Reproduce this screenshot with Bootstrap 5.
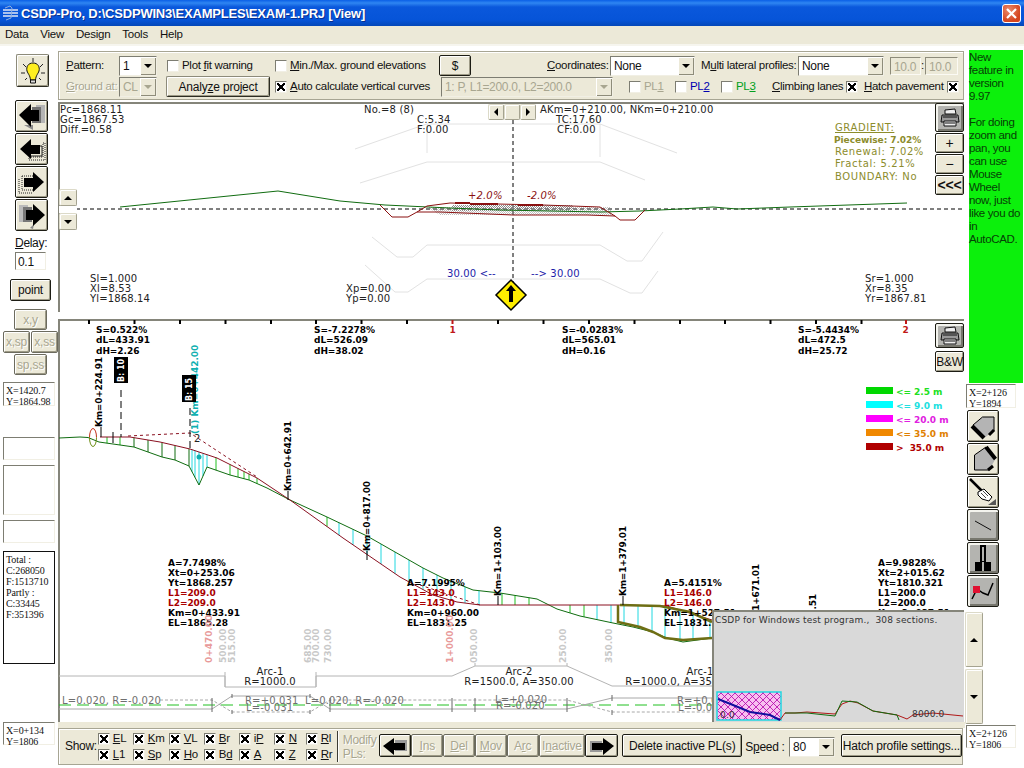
<!DOCTYPE html>
<html lang="en">
<head>
<meta charset="UTF-8">
<title>CSDP-Pro</title>
<link href="https://cdn.jsdelivr.net/npm/bootstrap@5.3.0/dist/css/bootstrap.min.css" rel="stylesheet">
<style>
  body { margin: 0; background: #fff; font: 11.5px/1 "Liberation Sans", Arial, sans-serif; letter-spacing: -.3px; color: #111; }
  .app { width: 1024px; height: 768px; overflow: hidden; background: #fff; }

  /* title + menu */
  .title-bar { height: 26px; padding: 0 3px 0 2px; background: linear-gradient(#0a5fe6 0, #2f86f2 3px, #0a58dc 7px, #0654d8 20px, #0447b8 26px); color: #fff; }
  .title-text { margin-left: 2px; font: bold 13px "Liberation Sans", sans-serif; letter-spacing: -.2px; text-shadow: 1px 1px #0a2f8f; }
  .close-btn { width: 19px; height: 19px; border: 1px solid #fff; border-radius: 3px; background: radial-gradient(circle at 35% 30%, #ea8a6c, #d4451f 70%); }
  .menu-bar { height: 20px; background: #ece9d8; border-bottom: 2px solid #f6f5ee; padding-left: 5px; gap: 12px; font-size: 11.5px; letter-spacing: -.25px; }

  .win-body { display: grid; grid-template-columns: 58px 908px 58px; height: 722px; }

  /* buttons */
  .btn.win-btn { --bs-btn-padding-x: 0; --bs-btn-padding-y: 0; --bs-btn-font-size: 12px; --bs-btn-line-height: 1; --bs-btn-border-radius: 2px;
    display: flex; align-items: center; justify-content: center; background: #ece9d8; color: #111; border: 1px solid #1c1c14; box-shadow: inset 1px 1px #fff, inset -1px -1px #9d9a86; letter-spacing: -.2px; }
  .btn.win-btn:disabled { color: #a8a690; opacity: 1; border-color: #6c6b5e; background: #ece9d8; text-shadow: 1px 1px #fff; }
  .btn.win-gray { background: #b4b4b0; box-shadow: inset 2px 2px #f4f4ee, inset -2px -2px #77776e; }
  .btn.win-soft { border-color: #8d8b7a #2c2c22 #2c2c22 #8d8b7a; }
  .btn.win-btn.win-flat { border-color: #dcdac8 #a5a390 #a5a390 #dcdac8; box-shadow: inset 1px 1px #fff; }

  /* left column */
  .left-col, .right-col { position: relative; }
  .lc-bulb { margin: 8px 0 0 16px; width: 33px; height: 33px; }
  .lc-arrow { margin: 1px 0 0 15px; width: 33px; height: 32px; }
  .lc-arrow.first-arrow { margin-top: 13px; }
  .lc-delay { margin: 6px 0 0 15px; height: 12px; font-size: 12px; }
  .lc-input { margin: 3px 0 0 15px; width: 31px; height: 18px; font-size: 12px; padding: 3px 0 0 2px; }
  .lc-point { margin: 9px 0 0 10px; width: 41px; height: 22px; font-size: 12px; }
  .lc-xy { margin: 8px 0 0 14px; width: 33px; height: 21px; }
  .lc-pair { margin: 1px 0 0 3px; gap: 1px; }
  .lc-pair .win-btn { width: 27px; height: 22px; }
  .lc-spss { margin: 1px 0 0 14px; width: 33px; height: 21px; }
  .sunken { background: #fff; border-style: solid; border-width: 1px; border-color: #7d7d72 #f1efe4 #f1efe4 #7d7d72; }
  .read-box { width: 52px; margin-left: 3px; padding: 2px 0 0 2px; font: 10px/11px "Liberation Serif", serif; letter-spacing: -.1px; }
  .rb-a { margin-top: 7px; height: 24px; }
  .rb-b { margin-top: 31px; height: 23px; }
  .rb-c { margin-top: 5px; height: 50px; }
  .rb-d { margin-top: 5px; height: 23px; }
  .rb-total { margin-top: 8px; height: 113px; border: 1px solid #111; }
  .rb-e { margin-top: 58px; height: 23px; }

  /* centre column */
  .tool-top { margin-top: 5px; width: 906px; height: 49px; background: #ece9d8; border: 1px solid #a7a593; box-shadow: inset 1px 1px #fff; padding: 3px 0 0 7px; }
  .tb-row { display: grid; align-items: center; height: 21px; }
  .tb-one { grid-template-columns: 53px 48px 108px 164px 108px 63px 91px 97px 92px 31px 4px 33px; }
  .tb-two { grid-template-columns: 53px 47px 109px 166px 188px 46px 46px 51px 92px 94px; }
  .fake-label { white-space: nowrap; }
  .dim { color: #a8a690; text-shadow: 1px 1px #fff; }
  .pl-off { color: #a8a690; }
  .pl-blue { color: #0000b0; }
  .pl-green { color: #00a020; }
  .chk-row { display: flex; align-items: center; gap: 3px; white-space: nowrap; }
  .chk-end { justify-content: space-between; }
  .end-a { width: 83px; } .end-b { width: 94px; }
  .chk-box { display: inline-block; flex: none; width: 12px; height: 12px; background-color: #fff; border: 1px solid; border-color: #7d7d72 #f1efe4 #f1efe4 #7d7d72; }
  .chk-box.on { background-image: linear-gradient(45deg, transparent 38%, #000 38%, #000 62%, transparent 62%), linear-gradient(-45deg, transparent 38%, #000 38%, #000 62%, transparent 62%); background-size: 8px 8px; background-position: center; background-repeat: no-repeat; }
  .drop { display: flex; height: 20px; background: #fff; border: 1px solid; border-color: #7d7d72 #f1efe4 #f1efe4 #7d7d72; font-size: 12px; align-items: center; padding-left: 3px; }
  .drop span:first-child { flex: 1; white-space: nowrap; overflow: hidden; }
  .drop-arrow { flex: none; width: 16px; height: 18px; display: flex; align-items: center; justify-content: center; background: #ece9d8; box-shadow: inset 1px 1px #fff, inset -1px -1px #8e8c7a; }
  .tri-d { width: 0; height: 0; border: 4px solid transparent; border-top: 4px solid #000; border-bottom: 0; }
  .tri-u { width: 0; height: 0; border: 4px solid transparent; border-bottom: 4px solid #000; border-top: 0; }
  .tri-l { width: 0; height: 0; border: 4px solid transparent; border-right: 4px solid #000; border-left: 0; }
  .tri-r { width: 0; height: 0; border: 4px solid transparent; border-left: 4px solid #000; border-right: 0; }
  .drop-off { background: #ece9d8; color: #a8a690; }
  .drop-off .tri-d { border-top-color: #a8a690; }
  .w38 { width: 38px; } .w85 { width: 85px; } .w86 { width: 86px; } .w172 { width: 172px; } .w46 { width: 46px; } .w31 { width: 31px; } .w33 { width: 33px; }
  .w32 { width: 32px; height: 21px; } .w104 { width: 104px; height: 21px; }
  .num-off { height: 18px; background: #ece9d8; border: 1px solid; border-color: #8d8b7a #fbfaf4 #fbfaf4 #8d8b7a; color: #a8a690; font-size: 12px; padding: 3px 0 0 3px; }

  .cad-pane { position: relative; width: 906px; background: #fff; box-shadow: inset 2px 2px 0 #85857a; }
  .pane-x { margin-top: 2px; height: 210px; }
  .pane-p { margin-top: 7px; height: 403px; }
  .cad-pane > svg { display: block; }
  .cad-t { font: 10px "DejaVu Sans", sans-serif; letter-spacing: .15px; fill: #222; }
  .cad-b { font: bold 9px "DejaVu Sans", sans-serif; letter-spacing: -.05px; fill: #000; }
  .cad-v { letter-spacing: -.25px; }
  .cad-flag { font-size: 8px; fill: #fff; }
  .cad-g { fill: #6f6f6f; }
  .cad-r { fill: #a80000; }
  .cad-red { fill: #c01818; }
  .cad-dim { fill: #c8c8c8; } .cad-pink { fill: #e89a9a; }
  .cad-teal { fill: #10b0b0; }
  .cad-blue { fill: #1c1ca8; }
  .cad-ol { fill: #8c8c2c; }
  .cad-wide { letter-spacing: .6px; }
  .cad-it { font-style: italic; fill: #8a1010; }
  .cad-mm { font-size: 9px; fill: #333; }
  .lg-a { fill: #20e020; } .lg-b { fill: #20e0e0; } .lg-c { fill: #e020e0; } .lg-d { fill: #e08000; } .lg-e { fill: #b00000; }

  .spin { position: absolute; left: 1px; top: 87px; width: 18px; }
  .spin .win-btn { width: 18px; height: 17px; }
  .spin-mid { height: 7px; background: #fff; }
  .h-scroll { position: absolute; left: 430px; top: 2px; }
  .h-scroll .win-btn { width: 16px; height: 16px; }
  .side-tools { position: absolute; right: 0; top: 1px; width: 29px; gap: 1px; }
  .side-tools .win-btn { width: 29px; }
  .st-print { height: 29px; }
  .st-btn { height: 20px; font-size: 14px; }
  .side-prof { position: absolute; right: 0; top: 4px; width: 29px; gap: 3px; }
  .sp-print { width: 29px; height: 25px; }
  .sp-bw { width: 29px; height: 21px; font-size: 12px; }
  .mini-map { position: absolute; left: 654px; top: 291px; width: 252px; height: 112px; background: #d9d9d9; border-top: 2px solid #85857a; border-left: 2px solid #85857a; }
  .mini-map svg { display: block; }

  .stripe { width: 907px; height: 6px; background: #ece9d8; }
  .tool-bottom { width: 905px; height: 37px; background: #ece9d8; border: 1px solid #a7a593; box-shadow: inset 1px 1px #fff; }
  .show-lbl { width: 39px; padding-left: 6px; font-size: 12px; margin-top: -2px; }
  .show-grid { display: grid; grid-template-columns: 35px 36px 35px 35px 35px 32px 31px; grid-auto-rows: 16px; width: 239px; margin-top: 1px; }
  .show-sep { width: 1px; height: 31px; background: #3c3c34; box-shadow: 1px 0 #fff; }
  .modify-lbl { width: 36px; margin-left: 5px; font-size: 12px; line-height: 14px; }
  .btn.bb { height: 23px; margin-top: -2px; }
  .bb-arrow { width: 33px; } .bb-ins { width: 32px; } .bb-ina { width: 47px; }
  .btn.bb-del { width: 121px; margin-left: 4px; font-size: 12px; }
  .speed-lbl { width: 44px; margin-left: 3px; font-size: 12px; white-space: nowrap; }
  .btn.bb-hatch { width: 122px; margin-left: 6px; font-size: 12px; }

  /* right column */
  .green-note { margin: 4px 0 0 3px; width: 54px; height: 333px; background: #0cf00c; color: #064006; font-size: 11.5px; line-height: 13px; padding-top: 1px; letter-spacing: -.35px; white-space: nowrap; }
  .rc-box { margin-left: 0; width: 50px; padding: 2px 0 0 2px; font: 10px/11px "Liberation Serif", serif; letter-spacing: -.1px; }
  .rc-a { margin-top: 1px; height: 24px; }
  .rc-icon { margin: 1px 0 0 1px; width: 32px; height: 32px; }
  .rc-icon.first-icon { margin-top: 2px; }
  .mm-up { margin: 5px 0 0 -1px; width: 18px; height: 55px; }
  .mm-down { margin: 2px 0 0 -1px; width: 18px; height: 55px; }
  .rc-b { margin-top: 1px; height: 23px; }
</style>
</head>
<body>
<div class="app d-flex flex-column">

  <!-- title bar -->
  <div class="title-bar d-flex align-items-center">
    <svg width="17" height="16" viewBox="0 0 17 16"><path d="M1 5h15M1 8h15M1 11h15" stroke="#dfe6f5" stroke-width="1.5"/><path d="M3 3l5-2 2 2-1 10-5 2" fill="none" stroke="#8fb0e0"/></svg>
    <span class="title-text">CSDP-Pro, D:\CSDPWIN3\EXAMPLES\EXAM-1.PRJ [View]</span>
    <div class="close-btn ms-auto d-flex align-items-center justify-content-center">
      <svg width="13" height="13" viewBox="0 0 13 13"><path d="M2 2l9 9M11 2l-9 9" stroke="#fff" stroke-width="2.2"/></svg>
    </div>
  </div>

  <!-- menu -->
  <div class="menu-bar d-flex align-items-center">
    <span>Data</span><span>View</span><span>Design</span><span>Tools</span><span>Help</span>
  </div>

  <div class="win-body">

    <!-- left column -->
    <div class="left-col d-flex flex-column">
      <button class="btn win-btn lc-bulb win-soft">
        <svg width="30" height="30" viewBox="0 0 30 30">
          <path d="M15 2v4M5 8l3 3M25 8l-3 3M3 17h4M23 17h4M7 24l2-2M23 24l-2-2" stroke="#222" stroke-width="1"/>
          <path d="M15 7c-5 0-7 4-6 8 1 3 3 4 3.500 9h5c.5-5 2.500-6 3.500-9 1-4-1-8-6-8z" fill="#ffef20" stroke="#111"/>
          <path d="M12.500 24h5v3h-5z" fill="#ddd" stroke="#111"/>
        </svg>
      </button>
      <button class="btn win-btn lc-arrow first-arrow">
        <svg width="30" height="30" viewBox="0 0 30 30"><path d="M19 4h9v18h-9z" fill="#b4b4b4"/><path d="M15 6h9v16h-9z" fill="#707070"/><path d="M7 24l9 5v-5z" fill="#8a8a8a"/><path d="M2 14L14 3v6h8v11h-8v6z" fill="#000"/></svg>
      </button>
      <button class="btn win-btn lc-arrow">
        <svg width="30" height="30" viewBox="0 0 30 30"><path d="M26 9h2v17H12v-3h14z" fill="none" stroke="#222" stroke-dasharray="1 1"/><path d="M23 12h2v10H12" fill="none" stroke="#222"/><path d="M3 15L14 5v6h9v9h-9v5z" fill="#000"/></svg>
      </button>
      <button class="btn win-btn lc-arrow">
        <svg width="30" height="30" viewBox="0 0 30 30"><path d="M5 9h13M5 9v14h13M2 12v14h13" fill="none" stroke="#222" stroke-dasharray="1 1"/><path d="M27 15L16 5v6H7v9h9v5z" fill="#000"/></svg>
      </button>
      <button class="btn win-btn lc-arrow">
        <svg width="30" height="30" viewBox="0 0 30 30"><path d="M2 5h9v17H2z" fill="#bbb"/><path d="M6 7h9v15H6z" fill="#777"/><path d="M17 24l-4 4 3 1z" fill="#888"/><path d="M28 15L16 4v6H9v10h7v6z" fill="#000"/></svg>
      </button>
      <div class="lc-delay"><u>D</u>elay:</div>
      <div class="lc-input sunken">0.1</div>
      <button class="btn win-btn lc-point">point</button>
      <button class="btn win-btn lc-xy" disabled>x,y</button>
      <div class="lc-pair d-flex">
        <button class="btn win-btn" disabled>x,sp</button>
        <button class="btn win-btn" disabled>x,ss</button>
      </div>
      <button class="btn win-btn lc-spss" disabled>sp,ss</button>
      <div class="read-box sunken rb-a">X=1420.7<br>Y=1864.98</div>
      <div class="read-box sunken rb-b"></div>
      <div class="read-box sunken rb-c"></div>
      <div class="read-box sunken rb-d"></div>
      <div class="read-box rb-total">Total :<br>C:268050<br>F:1513710<br>Partly :<br>C:33445<br>F:351396</div>
      <div class="read-box sunken rb-e">X=0+134<br>Y=1806</div>
    </div>

    <!-- centre column -->
    <div class="d-flex flex-column">

      <!-- top toolbar -->
      <div class="tool-top">
        <div class="tb-row tb-one">
          <span class="fake-label"><u>P</u>attern:</span>
          <div class="drop w38"><span>1</span><span class="drop-arrow"><i class="tri-d"></i></span></div>
          <div class="chk-row"><i class="chk-box"></i><span>Plot <u>f</u>it warning</span></div>
          <div class="chk-row"><i class="chk-box"></i><span><u>M</u>in./Max. ground elevations</span></div>
          <button class="btn win-btn w32">$</button>
          <span class="fake-label"><u>C</u>oordinates:</span>
          <div class="drop w85"><span>None</span><span class="drop-arrow"><i class="tri-d"></i></span></div>
          <span class="fake-label">M<u>u</u>lti lateral profiles:</span>
          <div class="drop w86"><span>None</span><span class="drop-arrow"><i class="tri-d"></i></span></div>
          <div class="num-off w31">10.0</div>
          <span>:</span>
          <div class="num-off w33">10.0</div>
        </div>
        <div class="tb-row tb-two">
          <span class="fake-label dim"><u>G</u>round at:</span>
          <div class="drop drop-off w38"><span>CL</span><span class="drop-arrow"><i class="tri-d"></i></span></div>
          <button class="btn win-btn w104 win-soft">Analy<u>z</u>e project</button>
          <div class="chk-row"><i class="chk-box on"></i><span><u>A</u>uto calculate vertical curves</span></div>
          <div class="drop drop-off w172"><span>1: P, L1=200.0, L2=200.0</span><span class="drop-arrow"><i class="tri-d"></i></span></div>
          <div class="chk-row pl-off"><i class="chk-box"></i><span>PL<u>1</u></span></div>
          <div class="chk-row pl-blue"><i class="chk-box"></i><span>PL<u>2</u></span></div>
          <div class="chk-row pl-green"><i class="chk-box"></i><span>PL<u>3</u></span></div>
          <div class="chk-row chk-end end-a"><span><u>C</u>limbing lanes</span><i class="chk-box on"></i></div>
          <div class="chk-row chk-end end-b"><span><u>H</u>atch pavement</span><i class="chk-box on"></i></div>
        </div>
      </div>

      <!-- cross section -->
      <div class="cad-pane pane-x">
        <svg width="906" height="210" viewBox="58 102 906 210">
          <defs>
            <pattern id="dots" width="2" height="2" patternUnits="userSpaceOnUse"><path d="M0 0h1v1H0zM1 1h1v1H1z" fill="#8c8c8c"/></pattern>
          </defs>
          <g fill="none" stroke="#e2e2e2" stroke-width="1">
            <path d="M355 149L415 128 427 124H600L677 153M427 124v29M600 124v33"/>
            <path d="M360 183L427 162H600L645 180"/>
            <path d="M372 237L397 257 413 257 427 245H600L627 261H642L663 232"/>
            <path d="M365 265L395 292H408L427 279H600L630 293H642L658 271"/>
          </g>
          <path d="M76 209H964" stroke="#000" stroke-dasharray="4 3" fill="none"/>
          <path d="M513 120V282" stroke="#000" stroke-dasharray="4 3" fill="none"/>
          <path d="M427 207H610L612 215H440z" fill="url(#dots)" opacity=".55"/>
          <path d="M452 205H573V211H452z" fill="url(#dots)"/>
          <path d="M120 207L278 191 340 201 385 205 450 208 500 210 600 212 640 211 680 209 713 207 737 209 790 207 907 203" fill="none" stroke="#106c10"/>
          <path d="M380 205L392 217H408L417 212 427 206 450 203 543 205 600 207 615 216 620 220H635L645 210" fill="none" stroke="#8a1010"/>
          <path d="M417 212H440L513 215H587L615 216" fill="none" stroke="#8a1010"/>
          <path d="M455 203H470M470 204H498M518 205H543" fill="none" stroke="#8a1010" stroke-width="2"/>
          <text class="cad-t" x="60" y="113">Pc=1868.11</text>
          <text class="cad-t" x="60" y="123">Gc=1867.53</text>
          <text class="cad-t" x="60" y="133">Diff.=0.58</text>
          <text class="cad-t" x="364" y="113">No.=8 (8)</text>
          <text class="cad-t" x="417" y="123">C:5.34</text>
          <text class="cad-t" x="417" y="133">F:0.00</text>
          <text class="cad-t" x="540" y="113">AKm=0+210.00, NKm=0+210.00</text>
          <text class="cad-t" x="556" y="123">TC:17.60</text>
          <text class="cad-t" x="557" y="133">CF:0.00</text>
          <text class="cad-t cad-it" x="468" y="199">+2.0%</text>
          <text class="cad-t cad-it" x="527" y="199">-2.0%</text>
          <text class="cad-t cad-blue" x="447" y="277">30.00 &lt;--</text>
          <text class="cad-t cad-blue" x="531" y="277">--&gt; 30.00</text>
          <text class="cad-t" x="90" y="282">Sl=1.000</text>
          <text class="cad-t" x="90" y="292">Xl=8.53</text>
          <text class="cad-t" x="90" y="302">Yl=1868.14</text>
          <text class="cad-t" x="346" y="292">Xp=0.00</text>
          <text class="cad-t" x="346" y="302">Yp=0.00</text>
          <text class="cad-t" x="865" y="282">Sr=1.000</text>
          <text class="cad-t" x="865" y="292">Xr=8.35</text>
          <text class="cad-t" x="865" y="302">Yr=1867.81</text>
          <text class="cad-t cad-ol cad-wide" x="835" y="131" text-decoration="underline">GRADIENT:</text>
          <text class="cad-b cad-ol" x="834" y="143">Piecewise:  7.02%</text>
          <text class="cad-t cad-ol cad-wide" x="835" y="155">Renewal: 7.02%</text>
          <text class="cad-t cad-ol cad-wide" x="835" y="167">Fractal: 5.21%</text>
          <text class="cad-t cad-ol cad-wide" x="835" y="180">BOUNDARY: No</text>
          <path d="M511 280L526 295 511 310 496 295z" fill="#ffee00" stroke="#000" stroke-width="1.500"/>
          <path d="M511 285l5 6h-3v11h-4v-11h-3z" fill="#000"/>
        </svg>
        <div class="spin d-flex flex-column">
          <button class="btn win-btn win-flat"><i class="tri-u"></i></button>
          <div class="spin-mid"></div>
          <button class="btn win-btn win-flat"><i class="tri-d"></i></button>
        </div>
        <div class="h-scroll d-flex">
          <button class="btn win-btn win-flat"><i class="tri-l"></i></button>
          <button class="btn win-btn win-flat"></button>
          <button class="btn win-btn win-flat"><i class="tri-r"></i></button>
        </div>
        <div class="side-tools d-flex flex-column">
          <button class="btn win-btn win-gray st-print">
            <svg width="22" height="20" viewBox="0 0 22 20"><path d="M6 2l10-1 1 5H6z" fill="#eee" stroke="#111"/><path d="M3 7h16l1 7H2z" fill="#999" stroke="#111"/><path d="M5 13h12v5H5z" fill="#eee" stroke="#111"/><path d="M4 9h14M6 15h10" stroke="#111"/></svg>
          </button>
          <button class="btn win-btn st-btn">+</button>
          <button class="btn win-btn st-btn">&minus;</button>
          <button class="btn win-btn st-btn"><b>&lt;&lt;&lt;</b></button>
        </div>
      </div>

      <!-- profile -->
      <div class="cad-pane pane-p">
        <svg width="906" height="403" viewBox="58 319 906 403">
          <path d="M89 320v4M134.500 320v4M180 320v4M225.500 320v4M271 320v4M316 320v4M361.500 320v4M407 320v4M498 320v4M543.500 320v4M589 320v4M634.500 320v4M680 320v4M725 320v4M770.500 320v4M816 320v4M861.500 320v4" stroke="#000" stroke-width="2"/>
          <path d="M452.500 320v4M906 320v4" stroke="#c01818" stroke-width="2"/>
          <text class="cad-b cad-red" x="449.500" y="333">1</text>
          <text class="cad-b cad-red" x="902.500" y="333">2</text>

          <!-- long section -->
          <g id="hatch" stroke-width="1"></g>
          <path id="ground" d="" fill="none" stroke="#106c10"/>
          <path id="design" d="" fill="none" stroke="#8a1020"/>
          <path d="M128 436L190 433 257 477M420 585L480 605" fill="none" stroke="#8a1020" stroke-dasharray="3 3"/>
          <path d="M618 605v17l22 5 13 5 12 6 18 2 29-2M620 605l40 1 30 6 22 10" fill="none" stroke="#6e6e14" stroke-width="2.500"/>
          <path d="M89.500 437.500A3.500 9 0 0 1 96.500 437.500" fill="none" stroke="#c03018"/>
          <path d="M89.500 437.500A3.500 9 0 0 0 96.500 437.500" fill="none" stroke="#6e8e14"/>
          <circle cx="199" cy="457" r="2.500" fill="#10b0b0"/>
          <path d="M113 432v11M101 427v10M288 491v9M367 551v9M498 596v9M623 596v9" stroke="#000" fill="none"/>
          <path d="M121 390v47M190 408v40" stroke="#000" stroke-dasharray="7 4" fill="none"/>
          <text class="cad-t" x="194" y="442">2</text>

          <g class="cad-b">
            <text x="96" y="333">S=0.522%</text><text x="96" y="343">dL=433.91</text><text x="96" y="354">dH=2.26</text>
            <text x="314" y="333">S=-7.2278%</text><text x="314" y="343">dL=526.09</text><text x="314" y="354">dH=38.02</text>
            <text x="562" y="333">S=-0.0283%</text><text x="562" y="343">dL=565.01</text><text x="562" y="354">dH=0.16</text>
            <text x="798" y="333">S=-5.4434%</text><text x="798" y="343">dL=472.5</text><text x="798" y="354">dH=25.72</text>

            <text x="168" y="566">A=7.7498%</text><text x="168" y="576">Xt=0+253.06</text><text x="168" y="586">Yt=1868.257</text>
            <text x="168" y="596" class="cad-r">L1=209.0</text><text x="168" y="606" class="cad-r">L2=209.0</text>
            <text x="168" y="616">Km=0+433.91</text><text x="168" y="626">EL=1865.28</text>

            <text x="407" y="586">A=7.1995%</text>
            <text x="407" y="596" class="cad-r">L1=143.0</text><text x="407" y="606" class="cad-r">L2=143.0</text>
            <text x="407" y="616">Km=0+960.00</text><text x="407" y="626">EL=1831.25</text>

            <text x="664" y="586">A=5.4151%</text>
            <text x="664" y="596" class="cad-r">L1=146.0</text><text x="664" y="606" class="cad-r">L2=146.0</text>
            <text x="664" y="616">Km=1+527.51</text><text x="664" y="626">EL=1831.25</text>

            <text x="878" y="566">A=9.9828%</text><text x="878" y="576">Xt=2+015.62</text><text x="878" y="586">Yt=1810.321</text>
            <text x="878" y="596">L1=200.0</text><text x="878" y="606">L2=200.0</text>
            <text x="878" y="616">Km=2+027.51</text>

            <text class="cad-v" transform="translate(102 427) rotate(-90)">Km=0+224.91</text>
            <text class="cad-v" transform="translate(291 491) rotate(-90)">Km=0+642.91</text>
            <text class="cad-v" transform="translate(370 551) rotate(-90)">Km=0+817.00</text>
            <text class="cad-v" transform="translate(501 596) rotate(-90)">Km=1+103.00</text>
            <text class="cad-v" transform="translate(626 596) rotate(-90)">Km=1+379.01</text>
            <text class="cad-v" transform="translate(759 634) rotate(-90)">Km=1+671.01</text>
            <text class="cad-v" transform="translate(816 664) rotate(-90)">Km=1+857.51</text>
            <text transform="translate(198 434) rotate(-90)" class="cad-teal">(1) Km=0+442.00</text>

            <text transform="translate(212 663) rotate(-90)" class="cad-pink">0+470.00</text>
            <text transform="translate(226 663) rotate(-90)" class="cad-dim">500.00</text>
            <text transform="translate(235 663) rotate(-90)" class="cad-dim">515.00</text>
            <text transform="translate(311 663) rotate(-90)" class="cad-dim">685.00</text>
            <text transform="translate(319 663) rotate(-90)" class="cad-dim">700.00</text>
            <text transform="translate(331 663) rotate(-90)" class="cad-dim">730.00</text>
            <text transform="translate(453 663) rotate(-90)" class="cad-pink">1+000.00</text>
            <text transform="translate(477 663) rotate(-90)" class="cad-dim">050.00</text>
            <text transform="translate(566 663) rotate(-90)" class="cad-dim">250.00</text>
            <text transform="translate(612 663) rotate(-90)" class="cad-dim">350.00</text>
          </g>

          <!-- station flags -->
          <path d="M114 357h14v26h-14zM182 375h14v27h-14z" fill="#000"/>
          <text class="cad-b cad-flag" transform="translate(124 382) rotate(-90)">B: 10</text>
          <text class="cad-b cad-flag" transform="translate(192 401) rotate(-90)">B: 15</text>

          <!-- legend -->
          <path d="M866 387h27v7h-27z" fill="#00d800"/><path d="M866 401h27v7h-27z" fill="#00ffff"/><path d="M866 415h27v7h-27z" fill="#ff00ff"/><path d="M866 429h27v7h-27z" fill="#f08800"/><path d="M866 443h27v7h-27z" fill="#b00000"/>
          <g class="cad-b">
            <text x="896" y="395" class="lg-a">&lt;= 2.5 m</text>
            <text x="896" y="409" class="lg-b">&lt;= 9.0 m</text>
            <text x="896" y="423" class="lg-c">&lt;= 20.0 m</text>
            <text x="896" y="437" class="lg-d">&lt;= 35.0 m</text>
            <text x="896" y="451" class="lg-e">&gt;&#160; 35.0 m</text>
          </g>

          <!-- horizontal alignment -->
          <path d="M59 676H225V687H316V676H452L475 666H567L612 686H712M225 672v15M316 672v15M475 666v-3M567 666v-3" fill="none" stroke="#b4b4b4"/>
          <g class="cad-t" text-anchor="middle">
            <text x="270" y="675">Arc-1</text><text x="270" y="685">R=1000.0</text>
            <text x="519" y="675">Arc-2</text><text x="519" y="685">R=1500.0, A=350.00</text>
            <text x="700" y="675">Arc-1</text><text x="680" y="685">R=1000.0, A=350.00</text>
          </g>

          <!-- superelevation -->
          <path d="M59 705H712" stroke="#20c020" stroke-dasharray="12 6" fill="none"/>
          <path d="M59 709H212L232 696H310L330 709H567L612 698H712" fill="none" stroke="#a8a8a8"/>
          <path d="M160 700H212L232 712H310L330 700H567L612 712H712" fill="none" stroke="#a8a8a8" stroke-dasharray="3 2"/>
          <path d="M212 698v14M232 694v4M232 710v4M310 694v4M310 710v4M330 698v14M452 698v14M475 698v14M567 698v14M612 695v6M612 710v5" stroke="#666" fill="none"/>
          <g class="cad-t cad-g">
            <text x="62" y="704">L=0.020, R=-0.020</text>
            <text x="245" y="704">R=+0.031</text><text x="246" y="711">L=-0.031</text>
            <text x="305" y="704">L=0.020, R=-0.020</text>
            <text x="495" y="703">L=+0.020</text><text x="496" y="709">R=-0.020</text>
            <text x="677" y="704">R=+0.031</text><text x="678" y="711">L=-0.031</text>
          </g>
        </svg>

        <div class="side-prof d-flex flex-column">
          <button class="btn win-btn win-gray sp-print">
            <svg width="22" height="20" viewBox="0 0 22 20"><path d="M6 2l10-1 1 5H6z" fill="#eee" stroke="#111"/><path d="M3 7h16l1 7H2z" fill="#999" stroke="#111"/><path d="M5 13h12v5H5z" fill="#eee" stroke="#111"/><path d="M4 9h14M6 15h10" stroke="#111"/></svg>
          </button>
          <button class="btn win-btn sp-bw">B&amp;W</button>
        </div>

        <!-- overview map -->
        <div class="mini-map">
          <svg width="250" height="110" viewBox="714 612 250 110">
            <defs>
              <pattern id="cross" width="7" height="7" patternUnits="userSpaceOnUse">
                <path d="M0 0l7 7M7 0L0 7" stroke="#b000a8" stroke-width=".8"/>
              </pattern>
            </defs>
            <text class="cad-t cad-mm" x="715" y="623">CSDP for Windows test program.,&#160; 308 sections.</text>
            <path d="M717 692h64v28h-64z" fill="#f8c0f0"/>
            <path d="M717 692h64v28h-64z" fill="url(#cross)" stroke="#20d8e0" stroke-width="1.500"/>
            <path d="M718 699L733 705 750 712 770 715 780 720 785 713 795 713 807 712 835 714 842 704 850 701 858 703 873 711 897 715 907 719 913 715 933 713 963 716" fill="none" stroke="#b01818"/>
            <path d="M785 713L807 713 835 716 842 701 857 702 873 711 897 715 899 720" fill="none" stroke="#106c10"/>
            <path d="M718 699L733 705 750 712 770 715 780 720" fill="none" stroke="#1010a0" stroke-width="2"/>
            <text class="cad-t cad-mm" x="720" y="718">0.0</text>
            <text class="cad-t cad-mm" x="912" y="717">8000.0</text>
          </svg>
        </div>
      </div>

      <div class="stripe"></div>

      <!-- bottom toolbar -->
      <div class="tool-bottom d-flex align-items-center">
        <div class="show-lbl">Show:</div>
        <div class="show-grid">
          <div class="chk-row"><i class="chk-box on"></i><span><u>E</u>L</span></div>
          <div class="chk-row"><i class="chk-box on"></i><span><u>K</u>m</span></div>
          <div class="chk-row"><i class="chk-box on"></i><span><u>V</u>L</span></div>
          <div class="chk-row"><i class="chk-box on"></i><span><u>B</u>r</span></div>
          <div class="chk-row"><i class="chk-box on"></i><span>i<u>P</u></span></div>
          <div class="chk-row"><i class="chk-box on"></i><span><u>N</u></span></div>
          <div class="chk-row"><i class="chk-box on"></i><span><u>R</u>l</span></div>
          <div class="chk-row"><i class="chk-box on"></i><span><u>L</u>1</span></div>
          <div class="chk-row"><i class="chk-box on"></i><span><u>S</u>p</span></div>
          <div class="chk-row"><i class="chk-box on"></i><span><u>H</u>o</span></div>
          <div class="chk-row"><i class="chk-box on"></i><span>B<u>d</u></span></div>
          <div class="chk-row"><i class="chk-box on"></i><span><u>A</u></span></div>
          <div class="chk-row"><i class="chk-box on"></i><span><u>Z</u></span></div>
          <div class="chk-row"><i class="chk-box on"></i><span><u>R</u>r</span></div>
        </div>
        <div class="show-sep"></div>
        <div class="modify-lbl dim">Modify<br>PLs:</div>
        <button class="btn win-btn bb bb-arrow">
          <svg width="28" height="18" viewBox="0 0 28 18"><path d="M14 3h12v11H14z" fill="#999"/><path d="M2 9l11-8v5h11v7H13v5z" fill="#000"/></svg>
        </button>
        <button class="btn win-btn bb bb-ins" disabled><u>I</u>ns</button>
        <button class="btn win-btn bb bb-ins" disabled><u>D</u>el</button>
        <button class="btn win-btn bb bb-ins" disabled><u>M</u>ov</button>
        <button class="btn win-btn bb bb-ins" disabled>A<u>r</u>c</button>
        <button class="btn win-btn bb bb-ina" disabled>I<u>n</u>active</button>
        <button class="btn win-btn bb bb-arrow">
          <svg width="28" height="18" viewBox="0 0 28 18"><path d="M2 4h12v11H2z" fill="#999"/><path d="M26 9l-11-8v5H4v7h11v5z" fill="#000"/></svg>
        </button>
        <button class="btn win-btn bb bb-del">Delete inactive PL(s)</button>
        <div class="speed-lbl">S<u>p</u>eed :</div>
        <div class="drop w46"><span>80</span><span class="drop-arrow"><i class="tri-d"></i></span></div>
        <button class="btn win-btn bb bb-hatch">Hatch profile settings...</button>
      </div>
    </div>

    <!-- right column -->
    <div class="right-col d-flex flex-column">
      <div class="green-note">New<br>feature in<br>version<br>9.97<br><br>For doing<br>zoom and<br>pan, you<br>can use<br>Mouse<br>Wheel<br>now, just<br>like you do<br>in<br>AutoCAD.</div>
      <div class="rc-box sunken rc-a">X=2+126<br>Y=1894</div>
      <button class="btn win-btn rc-icon first-icon">
        <svg width="28" height="28" viewBox="0 0 28 28"><path d="M4 13L13.500 5H25V19L15 26z" fill="#b4b4b4"/><path d="M3 14L15 26" stroke="#000" stroke-width="4"/><path d="M4 13L13.500 5H25V19" fill="none" stroke="#000"/><path d="M25 18L20 23" stroke="#000" stroke-width="3"/></svg>
      </button>
      <button class="btn win-btn rc-icon">
        <svg width="28" height="28" viewBox="0 0 28 28"><path d="M5.500 10L17 2 26.500 14 20 25H5.500z" fill="#b4b4b4"/><path d="M17 2L26.500 14" stroke="#000" stroke-width="4"/><path d="M17 2L5.500 10V25H20" fill="none" stroke="#000"/><path d="M19 25l5-4" stroke="#000" stroke-width="3"/></svg>
      </button>
      <button class="btn win-btn rc-icon">
        <svg width="28" height="28" viewBox="0 0 28 28"><path d="M1 1l12 12" stroke="#000" stroke-width="2.500"/><path d="M9 14l6-3 8 8-3 4-7-2-4-4z" fill="#fff" stroke="#000"/><path d="M14 13l5 5M12 15l5 5" stroke="#000" stroke-width=".7"/><path d="M27 21v6h-8z" fill="#555"/></svg>
      </button>
      <button class="btn win-btn win-gray rc-icon">
        <svg width="28" height="28" viewBox="0 0 28 28"><path d="M6 10l16 9" stroke="#111"/></svg>
      </button>
      <button class="btn win-btn win-gray rc-icon">
        <svg width="28" height="28" viewBox="0 0 28 28"><path d="M12 2h4v16h-4z" fill="none" stroke="#000" stroke-width="2"/><path d="M6 18h16v9H6z" fill="#000"/><path d="M13 18h2v9h-2z" fill="#b4b4b0"/></svg>
      </button>
      <button class="btn win-btn win-gray rc-icon">
        <svg width="28" height="28" viewBox="0 0 28 28"><path d="M3 22L8 12l6 4 5 2 5-12" fill="none" stroke="#000" stroke-width="1.500"/><path d="M4 9h7v7H4z" fill="#e01030"/></svg>
      </button>
      <button class="btn win-btn win-flat mm-up"><i class="tri-u"></i></button>
      <button class="btn win-btn win-flat mm-down"><i class="tri-d"></i></button>
      <div class="rc-box sunken rc-b">X=2+126<br>Y=1806</div>
    </div>
  </div>
</div>

<script src="https://cdn.jsdelivr.net/npm/bootstrap@5.3.0/dist/js/bootstrap.bundle.min.js"></script>
<script>
  // long section polylines, in window pixels
  const ground = [[59,438],[80,437],[88,437.5],[99,442],[134,447],[162,457],[175,460],[189,466],[199,485],[207,467],[230,475],[249,480],[267,488],[290,500],[327,517],[367,536],[423,568],[443,578],[473,590],[500,593],[537,599],[557,609],[580,616],[613,623],[633,627],[653,632],[667,638],[683,642],[712,638]];
  const design = [[100,437],[130,437],[160,442],[190,449],[217,458],[257,478],[290,500],[343,538],[400,577],[433,595],[457,602],[480,605],[618,605],[667,606],[712,620]];
  const toPath = pts => 'M' + pts.map(p => p.join(' ')).join('L');
  document.getElementById('ground').setAttribute('d', toPath(ground));
  document.getElementById('design').setAttribute('d', toPath(design));

  function yAt(pts, x) {
    for (let i = 1; i < pts.length; i++) {
      if (x <= pts[i][0]) {
        const [x0, y0] = pts[i - 1], [x1, y1] = pts[i];
        return y0 + (y1 - y0) * (x - x0) / (x1 - x0);
      }
    }
    return pts[pts.length - 1][1];
  }

  // fill/cut hatch at each station
  const stations = [
    [107,'#20c020'],[120,'#20c020'],[134,'#106c10'],[148,'#106c10'],[162,'#106c10'],[175,'#106c10'],[189,'#106c10'],
    [192,'#20d8e0'],[195,'#20d8e0'],[199,'#20d8e0'],[203,'#20d8e0'],[207,'#20d8e0'],[216,'#20c020'],[230,'#20c020'],[238,'#20c020'],[244,'#20c020'],[249,'#20c020'],[257,'#20c020'],
    [327,'#20c020'],[339,'#20d8e0'],[353,'#20d8e0'],[367,'#20d8e0'],[381,'#20d8e0'],[395,'#20d8e0'],[409,'#20d8e0'],[423,'#20d8e0'],[437,'#20d8e0'],[451,'#20d8e0'],[465,'#20d8e0'],[479,'#20d8e0'],
    [502,'#20c020'],[515,'#20c020'],[529,'#20c020'],[570,'#20c020'],[584,'#20c020'],[597,'#20d8e0'],[611,'#20d8e0'],[624,'#20d8e0'],[638,'#20d8e0'],[652,'#20d8e0'],[665,'#20d8e0'],[680,'#20d8e0'],[693,'#20d8e0'],[710,'#20d8e0']
  ];
  const hatch = document.getElementById('hatch');
  stations.forEach(([x, color]) => {
    const line = document.createElementNS('http://www.w3.org/2000/svg', 'line');
    line.setAttribute('x1', x); line.setAttribute('x2', x);
    line.setAttribute('y1', yAt(design, x)); line.setAttribute('y2', yAt(ground, x));
    line.setAttribute('stroke', color);
    hatch.appendChild(line);
  });
</script>
</body>
</html>
